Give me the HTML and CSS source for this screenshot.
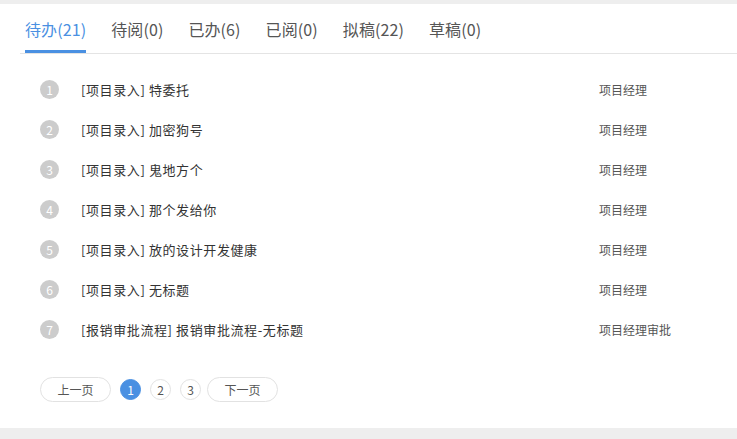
FILE: index.html
```html
<!DOCTYPE html>
<html lang="zh-CN">
<head>
    <meta charset="UTF-8">
    <meta name="viewport" content="width=device-width, initial-scale=1.0">
    <title>待办事项</title>
    <link rel="stylesheet" href="styles.css">
</head>
<body>

    <div class="panel">
        <div class="tabs">
            <div class="tab active">待办(21)</div>
            <div class="tab">待阅(0)</div>
            <div class="tab">已办(6)</div>
            <div class="tab">已阅(0)</div>
            <div class="tab">拟稿(22)</div>
            <div class="tab">草稿(0)</div>
        </div>

        <ul class="list">
            <li class="row"><span class="num">1</span><span class="title">[项目录入] 特委托</span><span class="node">项目经理</span></li>
            <li class="row"><span class="num">2</span><span class="title">[项目录入] 加密狗号</span><span class="node">项目经理</span></li>
            <li class="row"><span class="num">3</span><span class="title">[项目录入] 鬼地方个</span><span class="node">项目经理</span></li>
            <li class="row"><span class="num">4</span><span class="title">[项目录入] 那个发给你</span><span class="node">项目经理</span></li>
            <li class="row"><span class="num">5</span><span class="title">[项目录入] 放的设计开发健康</span><span class="node">项目经理</span></li>
            <li class="row"><span class="num">6</span><span class="title">[项目录入] 无标题</span><span class="node">项目经理</span></li>
            <li class="row"><span class="num">7</span><span class="title">[报销审批流程] 报销审批流程-无标题</span><span class="node">项目经理审批</span></li>
        </ul>

        <div class="pager">
            <button class="btn">上一页</button>
            <button class="page current">1</button>
            <button class="page">2</button>
            <button class="page last">3</button>
            <button class="btn">下一页</button>
        </div>
    </div>

</body>
</html>
```

FILE: styles.css
```css
body {
    margin: 0;
    padding-top: 4px;
    background: #eeeeee;
    font-family: "Noto Sans CJK SC", "Noto Sans", sans-serif;
    color: #333;
}
.panel {
    background: #fff;
    height: 424px;
}
.tabs {
    display: flex;
    gap: 25px;
    margin-left: 20px;
    padding-left: 5px;
    border-bottom: 1px solid #e4e4e4;
}
.tab {
    height: 49px;
    line-height: 50px;
    font-size: 16px;
    letter-spacing: 0.1px;
    color: #555;
    box-sizing: border-box;
    cursor: pointer;
}
.tab.active {
    color: #4a90e2;
    border-bottom: 3px solid #4a90e2;
}
.list {
    list-style: none;
    margin: 15px 0 0;
    padding: 0;
}
.row {
    display: flex;
    align-items: center;
    height: 40px;
    font-size: 13px;
}
.num {
    width: 19px;
    height: 19px;
    border-radius: 50%;
    background: #cccccc;
    color: #fff;
    font-size: 12px;
    line-height: 19px;
    text-align: center;
    margin-left: 40px;
}
.title {
    margin-left: 22px;
    width: 518px;
    letter-spacing: 0.6px;
    color: #333;
}
.node {
    font-size: 12px;
    color: #555;
}
.pager {
    display: flex;
    align-items: center;
    gap: 9px;
    margin-top: 28px;
    padding-left: 40px;
}
.pager button {
    font-family: inherit;
    background: #fff;
    border: 1px solid #e2e2e2;
    color: #555;
    font-size: 12px;
    padding: 0;
    cursor: pointer;
}
.btn {
    width: 71px;
    height: 25px;
    border-radius: 13px;
}
.page {
    width: 21px;
    height: 21px;
    border-radius: 50%;
}
.page.last {
    margin-right: -3px;
}
.pager .page.current {
    background: #4a90e2;
    border-color: #4a90e2;
    color: #fff;
}
```
